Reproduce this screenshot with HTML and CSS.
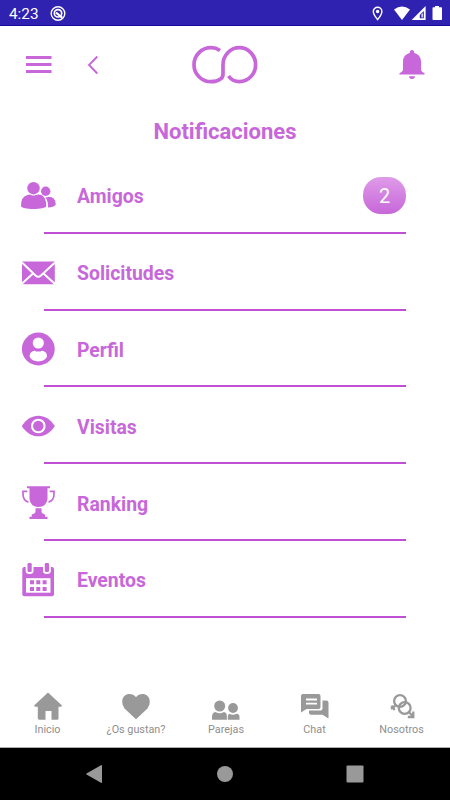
FILE: index.html
```
<!DOCTYPE html>
<html lang="es">
<head>
    <meta charset="UTF-8">
    <meta name="viewport" content="width=device-width, initial-scale=1.0">
    <title>Notificaciones</title>
    <link rel="stylesheet" href="styles.css">
</head>
<body>

<div class="screen">
    <!-- Status bar -->
    <div class="status-bar">
        <span class="clock">4:23</span>
        <svg class="app-icon" width="16" height="16" viewBox="0 0 16 16" fill="none" stroke="#fff">
            <circle cx="8" cy="7.5" r="6.8" stroke-width="1.4"/>
            <circle cx="8" cy="7.300" r="3.700" stroke-width="1.700"/>
            <path d="M6 6.500 12.300 11.800" stroke-width="2.200"/>
        </svg>
        <svg class="status-icons" width="70" height="16" viewBox="0 0 70 16" fill="#fff">
            <path d="M5.600 1.300a4.300 4.300 0 0 0-4.300 4.300c0 3 4.300 8 4.300 8s4.300-5 4.300-8a4.300 4.300 0 0 0-4.300-4.300z" fill="none" stroke="#fff" stroke-width="1.400"/>
            <circle cx="5.600" cy="5.500" r="1.700"/>
            <path d="M22 3.600Q30 -2.400 38 3.600L30 14z"/>
            <path d="M53.600 0V14H39.600z"/>
            <path d="M51.800 5v7.300h-4V9z" fill="#3022b0"/>
            <path d="M49.500 8.500 50.800 7v4.500h-1.300z"/>
            <path d="M63 1.200V0h4v1.200h2c.6 0 1 .4 1 1V13c0 .6-.4 1-1 1h-7.500c-.6 0-1-.4-1-1V2.200c0-.6.4-1 1-1z"/>
        </svg>
    </div>

    <!-- Top bar -->
    <header class="top-bar">
        <svg class="menu" width="26" height="18" viewBox="0 0 26 18" fill="#c767d9">
            <path d="M0 0h25.500v3H0zM0 7h25.500v3H0zM0 14h25.500v3H0z"/>
        </svg>
        <svg class="back" width="12" height="20" viewBox="0 0 12 20" fill="none" stroke="#c767d9" stroke-width="1.900">
            <path d="M10.300 1.500 2 10 10.300 18.500"/>
        </svg>
        <svg class="logo" width="66" height="40" viewBox="0 0 66 40" fill="none" stroke="#c767d9" stroke-width="3.700">
            <path d="M28 5.500Q24 2.700 19 2.700A17 17 0 0 0 19 36.700Q25 36.700 28.500 34Q31 32.500 31 29V19.700A16.300 17 0 1 1 47.500 36.700Q40.500 36.700 36.500 31"/>
        </svg>
        <svg class="bell" width="26" height="30" viewBox="0 0 26 30" fill="#c767d9">
            <path d="M13 0c1.400 0 2.200 1 2.200 2.200v.8c4.200 1 6.800 4.200 6.800 8.500v8c0 1.500 1 2.300 3.200 3.500.7.400.5 1.600-.3 1.600H1.100c-.8 0-1-1.200-.3-1.600 2.200-1.200 3.200-2 3.200-3.500v-8c0-4.300 2.600-7.500 6.800-8.500v-.8C10.800 1 11.600 0 13 0zM10 26.300h6c0 1.600-1.200 2.700-3 2.700s-3-1.100-3-2.700z"/>
        </svg>
    </header>

    <h1>Notificaciones</h1>

    <!-- Notification list -->
    <main class="list">
        <div class="item">
            <svg class="item-icon" viewBox="0 0 36 36" fill="#c767d9">
                <circle cx="13.500" cy="10.200" r="6.200"/>
                <circle cx="25.700" cy="13.300" r="4.700"/>
                <path d="M7.500 17Q10 16 11 17Q13.500 18 16 17Q19 15.800 22 17.300Q26.300 20 26.300 28C26 32 1 32 1 28Q1 18.500 7.500 17z"/>
                <path d="M25.500 19.200Q27 19.600 28.500 18.800Q35.700 19 35.800 26.500Q34 29.300 28 29.500Q28.500 24 25.500 19.200z"/>
            </svg>
            <span class="label">Amigos</span>
            <span class="count">2</span>
        </div>
        <div class="item">
            <svg class="item-icon" viewBox="0 0 36 36" fill="#c767d9">
                <path d="M2 6.500h32.800v22.700h-32.800z"/>
                <path d="M2 7.500 15.500 20.500Q18.200 23 21 20.500L35 7.500M1 29.500 13 18.500M35.500 29.500 23.500 18.500" fill="none" stroke="#fff" stroke-width="2"/>
            </svg>
            <span class="label">Solicitudes</span>
        </div>
        <div class="item">
            <svg class="item-icon" viewBox="0 0 36 36" fill="#c767d9">
                <circle cx="18.300" cy="18" r="16.400"/>
                <g fill="#fff">
                    <circle cx="18.300" cy="12" r="5.600"/>
                    <path d="M14.300 19.700Q18.300 21.400 22.300 19.700C25.300 20.200 27 22 27 25.500C24.300 32 12.300 32 9.600 25.500C9.600 22 11.300 20.200 14.300 19.700z"/>
                </g>
            </svg>
            <span class="label">Perfil</span>
        </div>
        <div class="item">
            <svg class="item-icon" viewBox="0 0 36 36">
                <path d="M1.800 18C10.300 4.200 26.300 4.200 34.800 18C26.300 31.800 10.300 31.800 1.800 18z" fill="#c767d9"/>
                <circle cx="18.300" cy="18" r="6.300" fill="#c767d9" stroke="#fff" stroke-width="2.100"/>
            </svg>
            <span class="label">Visitas</span>
        </div>
        <div class="item">
            <svg class="item-icon" viewBox="0 0 36 36" fill="#c767d9">
                <path d="M7 1.300h23v2H27.500V14Q26.500 21.800 18.500 22Q10.300 21.800 9.500 14V3.300H7z"/>
                <path d="M15.500 23.300h6v3.700q.5 1.500 3.500 2.500v2.300h2.500V34h-18v-2.200h2.200v-2.300q3.300-1 3.800-2.500z"/>
                <path d="M7.300 6.300H3v3Q3 15.500 8.500 17.200M29.700 6.300h4.300v3Q34 15.500 28.500 17.200" fill="none" stroke="#c767d9" stroke-width="1.700"/>
            </svg>
            <span class="label">Ranking</span>
        </div>
        <div class="item">
            <svg class="item-icon" viewBox="0 0 36 36" fill="#c767d9">
                <rect x="2.300" y="5" width="31.700" height="29.300" rx="2"/>
                <path d="M6 16.200h24.500v14.500h-24.500z" fill="#fff"/>
                <path d="M5.700 4h7.800v5q0 3-3.900 3t-3.900-3zM23 4h7.800v5q0 3-3.900 3t-3.900-3z" fill="#fff"/>
                <rect x="7.500" y="1" width="4.200" height="9" rx="1.300"/>
                <rect x="24.800" y="1" width="4.200" height="9" rx="1.300"/>
                <path d="M10 18.300h4v4h-4zM16.300 18.300h4v4h-4zM22.600 18.300h4v4h-4zM10 25h4v4h-4zM16.300 25h4v4h-4zM22.600 25h4v4h-4z"/>
            </svg>
            <span class="label">Eventos</span>
        </div>
    </main>

    <!-- Bottom tabs -->
    <nav class="tabs">
        <div class="tab">
            <svg viewBox="0 0 30 30" fill="#999">
                <path d="M15 .5 29 13.500 28.200 14.800h-2.700v11.700c0 .8-.4 1.200-1.200 1.200h-5.800v-8.700h-6v8.700H6c-.8 0-1.200-.4-1.200-1.200V14.800H1.900l-.8-1.300z"/>
            </svg>
            <span>Inicio</span>
        </div>
        <div class="tab wide">
            <svg viewBox="0 0 30 30" fill="#999">
                <path d="M15 27.200 3.500 16.500Q1.200 13.500 1.200 9.700C1.200 1.200 11 -.300 15 5.200C19 -.300 28.800 1.200 28.800 9.700Q28.800 13.500 26.500 16.500z"/>
            </svg>
            <span>¿Os gustan?</span>
        </div>
        <div class="tab wide">
            <svg viewBox="0 0 30 30" fill="#999">
                <circle cx="8.700" cy="14" r="5.500"/>
                <circle cx="22" cy="16" r="4.900"/>
                <path d="M1 27.700v-3q0-4.200 3.500-4.800 4.200 2.600 8.400 0 3 .6 3 4v3.800zM16.800 27.700v-3.200q.2-2.400 1.500-2.800 3.700 2.200 7.400 0 2.800.4 2.800 3v3z"/>
            </svg>
            <span>Parejas</span>
        </div>
        <div class="tab">
            <svg viewBox="0 0 30 30" fill="#999">
                <path d="M3 2h15.500q2 0 2 2v11q0 2-2 2H6.500l-5.500 3.500V4q0-2 2-2z"/>
                <path d="M22.500 8.500H26.300q2.200 0 2.200 2v16l-6-3.700H11q-2 0-2-2v-2.300h11.500q2 0 2-2z"/>
                <path d="M6 7.500h11M6 11.700h11" stroke="#fff" stroke-width="1.800"/>
            </svg>
            <span>Chat</span>
        </div>
        <div class="tab">
            <svg viewBox="0 0 30 30" fill="none" stroke="#999" stroke-width="2.300">
                <circle cx="13" cy="9" r="5.900"/>
                <circle cx="17.700" cy="16" r="5.900"/>
                <path d="M8.700 13.300 4 16.800M4.500 13.800 7.700 18M21.700 20 25.500 23.800M26.300 19.500v5.500h-5.500"/>
            </svg>
            <span>Nosotros</span>
        </div>
    </nav>

    <!-- Android navigation -->
    <div class="android-nav">
        <svg width="18" height="20" viewBox="0 0 18 20" fill="#999"><path d="M16 1.200Q17 .6 17 2v16q0 1.400-1 .8L1.500 10.500q-.8-.5 0-1z"/></svg>
        <svg width="18" height="20" viewBox="0 0 18 20" fill="#999"><circle cx="9" cy="10" r="8"/></svg>
        <svg width="18" height="20" viewBox="0 0 18 20" fill="#999"><rect x=".5" y="1.500" width="17" height="17" rx="1"/></svg>
    </div>
</div>

</body>
</html>
```
FILE: styles.css
```
body {
    margin: 0;
    font-family: Roboto, sans-serif;
    background-color: #fff;
}

.screen {
    display: flex;
    flex-direction: column;
    width: 450px;
    height: 800px;
    overflow: hidden;
}

.status-bar {
    display: flex;
    align-items: center;
    height: 26px;
    box-sizing: border-box;
    padding: 3px 8px 0 9px;
    background-color: #3022b0;
    border-bottom: 1px solid #1b0aa0;
    color: #fff;
}

.clock {
    width: 41px;
    font-size: 15.3px;
}

.status-icons {
    margin-left: auto;
}

.top-bar {
    display: flex;
    align-items: center;
    height: 78px;
    padding: 0 25px 0 26px;
}

.back {
    margin-left: 35px;
}

.logo {
    margin-left: 93px;
}

.bell {
    margin-left: auto;
}

h1 {
    margin: 0;
    height: 53px;
    line-height: 55px;
    text-align: center;
    font-size: 22px;
    font-weight: 700;
    color: #c767d9;
}

.item {
    position: relative;
    display: flex;
    align-items: center;
    height: 76.8px;
    box-sizing: border-box;
    padding: 1px 44px 0 20px;
}

/* Divider starts further right than the icon */
.item::after {
    content: "";
    position: absolute;
    left: 44px;
    right: 44px;
    bottom: 0;
    height: 2px;
    background-color: #bf4fd3;
}

.item-icon {
    width: 36px;
    height: 36px;
}

.label {
    margin-left: 21px;
    padding-top: 2px;
    font-size: 19.4px;
    font-weight: 700;
    color: #c767d9;
}

.count {
    margin-left: auto;
    width: 43px;
    height: 37px;
    line-height: 39px;
    border-radius: 18px;
    text-align: center;
    font-size: 20px;
    color: #fff;
    background: linear-gradient(#df9be8, #c767d9);
}

.tabs {
    display: flex;
    height: 55px;
    margin-top: auto;
    padding: 0 4px;
    border-bottom: 1px solid #aaa;
}

.tab {
    display: flex;
    flex-direction: column;
    align-items: center;
    width: 87px;
    font-size: 10.8px;
    color: #8e8e8e;
}

.tab.wide {
    width: 90px;
}

.tab svg {
    width: 30px;
    height: 30px;
}

.tab span {
    padding-top: 1px;
}

.android-nav {
    display: flex;
    align-items: center;
    justify-content: space-between;
    height: 52px;
    padding: 0 86px 0 85px;
    background-color: #000;
}
```
